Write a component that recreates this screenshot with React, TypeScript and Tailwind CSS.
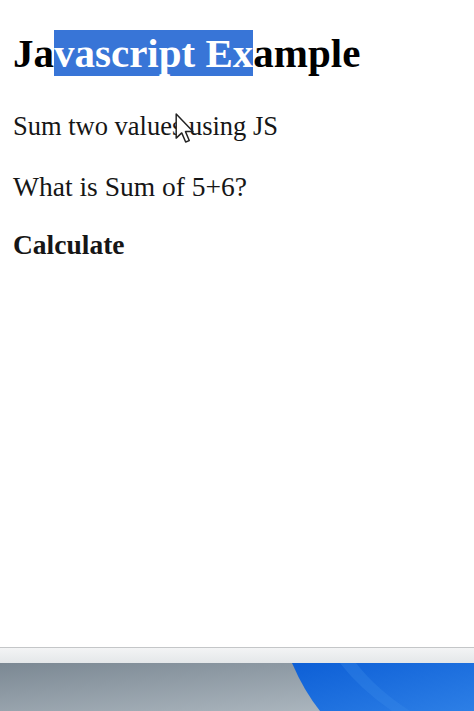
export default function App() {
  return (
    <div className="flex h-[711px] flex-col bg-white" style={{ fontFamily: '"Liberation Serif", "Times New Roman", serif' }}>
      {/* Page content */}
      <div className="relative flex-1 pl-[13px] pt-[29px] text-[#161616]">
        <h1 className="text-[41px] font-bold leading-[48px] text-black">
          Ja<span className="bg-[#3875d7] text-white">vascript Ex</span>ample
        </h1>
        <p className="mt-[34px] text-[26.5px] leading-[31px]">Sum two values using JS</p>
        <p className="mt-[29px] text-[27.5px] leading-[31px]">What is Sum of 5+6?</p>
        <p className="mt-[27px] text-[27.5px] font-bold leading-[31px]">Calculate</p>

        {/* Mouse pointer */}
        <svg className="absolute left-[175px] top-[113px]" width="20" height="31" viewBox="0 0 12 19">
          <path
            d="M0.6 0.6 L0.6 15.4 L4 12.2 L6.4 17.8 L8.6 16.9 L6.3 11.4 L10.9 11.4 Z"
            fill="white"
            stroke="#222"
            strokeWidth="0.9"
            strokeLinejoin="round"
          />
        </svg>
      </div>

      {/* Window bottom edge */}
      <div className="h-px bg-[#c4c6c8]" />
      <div className="h-[15px] bg-gradient-to-b from-[#f3f4f5] to-[#e4e7e9]" />

      {/* Taskbar / desktop */}
      <svg className="block" width="474" height="48" viewBox="0 0 474 48" preserveAspectRatio="none">
        <defs>
          <linearGradient id="gray" x1="0" y1="0" x2="1" y2="1">
            <stop offset="0" stopColor="#7b8893" />
            <stop offset="1" stopColor="#b4bec6" />
          </linearGradient>
          <linearGradient id="blue" x1="0" y1="0" x2="1" y2="1">
            <stop offset="0" stopColor="#0d5fd6" />
            <stop offset="1" stopColor="#2d7fe6" />
          </linearGradient>
        </defs>
        <rect width="474" height="48" fill="url(#gray)" />
        <path d="M292 0 Q304 28 320 48 L474 48 L474 0 Z" fill="url(#blue)" />
        <path d="M340 0 Q360 26 392 48 L410 48 Q376 26 356 0 Z" fill="#3a8ae8" opacity="0.35" />
      </svg>
    </div>
  )
}
